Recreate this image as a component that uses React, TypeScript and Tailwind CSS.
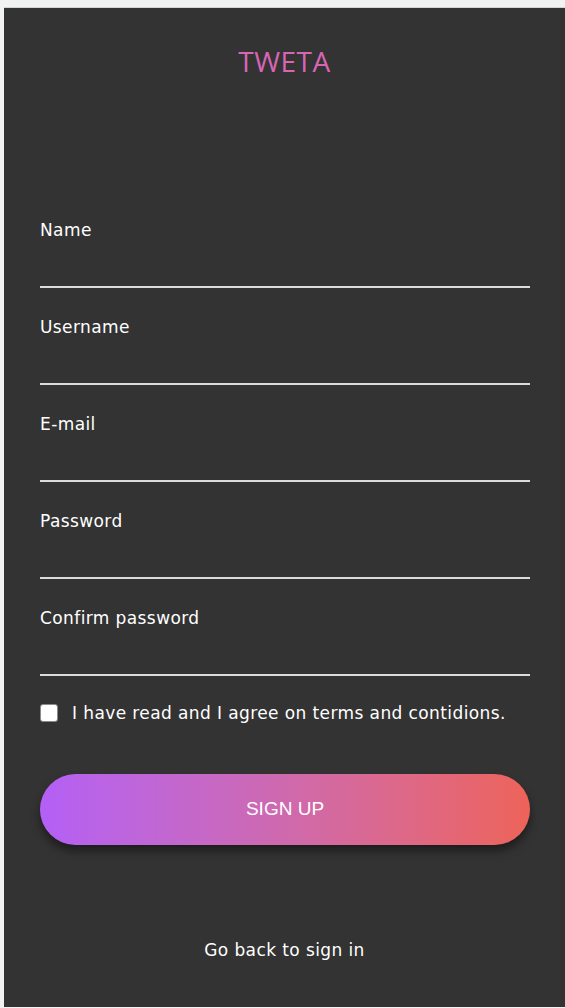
import React, { useState } from 'react';

const fields = ['Name', 'Username', 'E-mail', 'Password', 'Confirm password'];

const App: React.FC = () => {
  const [agree, setAgree] = useState(false);

  return (
    <div className="min-h-screen bg-[#f1f2f2] pt-[7px] pl-[4px] font-['DejaVu_Sans',sans-serif]">
      <div className="border-t border-[#d4d4d4] bg-[#333333] min-h-[1000px] flex flex-col">
        {/* Logo */}
        <h1 className="text-center text-[28px] leading-none text-[#d865b3] mt-[39px] tracking-[0.5px] font-['Open_Sans',sans-serif]">
          TWETA
        </h1>

        <form className="flex flex-col px-[36px] pr-[35px] mt-[116px]">
          {fields.map(label => (
            <label key={label} className="flex flex-col h-[97px]">
              <span className="text-white text-[17px] leading-none mt-[31px] tracking-[0.4px]">{label}</span>
              <input
                type={label.toLowerCase().includes('password') ? 'password' : 'text'}
                className="mt-auto bg-transparent border-b-2 border-[#dcdcdc] text-white outline-none h-[34px]"
              />
            </label>
          ))}

          <label className="flex items-center mt-[28px] gap-[14px]">
            <input
              type="checkbox"
              checked={agree}
              onChange={e => setAgree(e.target.checked)}
              className="w-[18px] h-[18px] appearance-none bg-white rounded-[3px] border border-[#8a8a8a]"
            />
            <span className="text-white text-[17px] leading-none tracking-[0.4px]">
              I have read and I agree on terms and contidions.
            </span>
          </label>

          <button
            type="button"
            className="mt-[52px] h-[71px] rounded-full bg-gradient-to-r from-[#b45ff6] to-[#ed6358] text-white text-[19px] font-['Liberation_Sans',sans-serif] shadow-[0_6px_10px_rgba(0,0,0,0.45)]"
          >
            SIGN UP
          </button>
        </form>

        <a className="text-center text-white text-[17px] leading-none mt-[97px] cursor-pointer tracking-[0.4px]">
          Go back to sign in
        </a>
      </div>
    </div>
  );
};

export default App;
